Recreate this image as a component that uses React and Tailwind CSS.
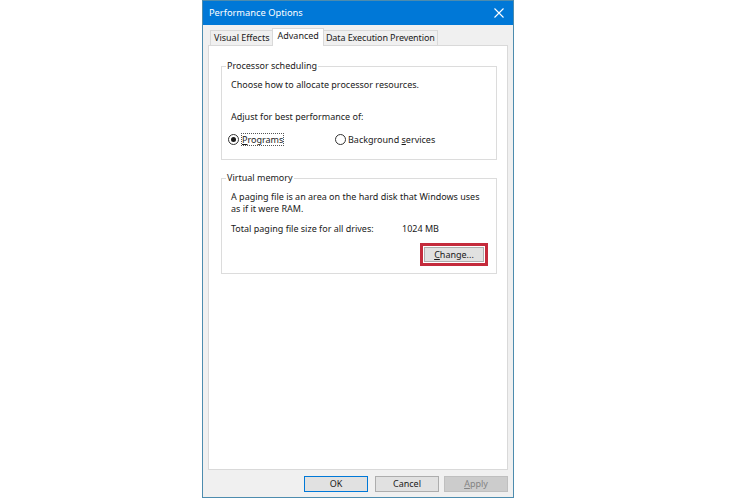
import React from "react";

function Radio({ checked }) {
  return (
    <span className="w-[11px] h-[11px] rounded-full border border-[#333] bg-white flex items-center justify-center shrink-0">
      {checked && <span className="w-[5px] h-[5px] rounded-full bg-[#1a1a1a]" />}
    </span>
  );
}

function GroupBox({ label, children, className }) {
  return (
    <div className={"relative border border-[#dcdcdc] " + className}>
      <span className="absolute left-[4px] top-[-7px] bg-white px-[1px] leading-[12px]">{label}</span>
      {children}
    </div>
  );
}

export default function App() {
  return (
    <div
      className="w-[750px] h-[500px] bg-white text-[#1a1a1a] text-[9px] leading-[12px]"
      style={{ fontFamily: '"Noto Sans", "Open Sans", sans-serif' }}
    >
      <div className="ml-[202px] w-[312px] h-[498px] border border-[#4d8cae] bg-[#f0f0f0] flex flex-col">
        {/* Title bar */}
        <div className="h-[24px] bg-[#0078d7] flex items-center justify-between pl-[6px] pr-[8px] text-white text-[9.3px]">
          <span>Performance Options</span>
          <svg width="10" height="10" viewBox="0 0 10 10" className="mr-[1px]">
            <path d="M0.5 0.5 L9.5 9.5 M9.5 0.5 L0.5 9.5" stroke="#ffffff" strokeWidth="1.1" />
          </svg>
        </div>

        {/* Tabs */}
        <div className="flex items-end pl-[7px] h-[20px]">
          <div className="h-[15px] px-[3px] flex items-center border border-b-0 border-[#d9d9d9] bg-[#f0f0f0] -mr-px">
            Visual Effects
          </div>
          <div className="h-[18px] px-[4px] flex items-center border border-b-0 border-[#d9d9d9] bg-white relative z-10 mb-[-1px] pb-[3px]">
            Advanced
          </div>
          <div className="h-[15px] px-[2px] flex items-center border border-b-0 border-[#d9d9d9] bg-[#f0f0f0] -ml-px tracking-[-0.1px]">
            Data Execution Prevention
          </div>
        </div>

        {/* Panel */}
        <div className="mx-[5px] h-[425px] border border-[#d9d9d9] bg-white pt-[20px] pl-[12px]">
          <GroupBox label="Processor scheduling" className="w-[276px] h-[94px]">
            <div className="pl-[9px] pt-[12px]">
              <div>Choose how to allocate processor resources.</div>
              <div className="mt-[20px]">Adjust for best performance of:</div>
              <div className="flex items-center mt-[10px] ml-[-3px] h-[13px]">
                <div className="w-[107px] flex items-center">
                  <Radio checked />
                  <span className="ml-[2px] border border-dotted border-[#555] leading-[11px]">
                    <span className="underline">P</span>rograms
                  </span>
                </div>
                <Radio />
                <span className="ml-[2px]">
                  Background <span className="underline">s</span>ervices
                </span>
              </div>
            </div>
          </GroupBox>

          <GroupBox label="Virtual memory" className="w-[276px] h-[96px] mt-[18px]">
            <div className="pl-[9px] pt-[12px]">
              <div>A paging file is an area on the hard disk that Windows uses</div>
              <div>as if it were RAM.</div>
              <div className="flex mt-[8px]">
                <span className="w-[171px]">Total paging file size for all drives:</span>
                <span>1024 MB</span>
              </div>
              <div className="flex justify-end pr-[8px] mt-[8px]">
                <div className="border-[3px] border-[#c42b3c] p-[1px]">
                  <div className="w-[60px] h-[15px] bg-[#e1e1e1] border border-[#adadad] flex items-center justify-center">
                    <span><span className="underline">C</span>hange...</span>
                  </div>
                </div>
              </div>
            </div>
          </GroupBox>
        </div>

        {/* Bottom buttons */}
        <div className="flex justify-end pr-[5px] mt-[6px]">
          <div className="w-[64px] h-[16px] bg-[#e1e1e1] border border-[#0078d7] flex items-center justify-center">OK</div>
          <div className="ml-[7px] w-[64px] h-[16px] bg-[#e1e1e1] border border-[#adadad] flex items-center justify-center">Cancel</div>
          <div className="ml-[5px] w-[64px] h-[16px] bg-[#cccccc] border border-[#bfbfbf] text-[#838383] flex items-center justify-center">
            <span><span className="underline">A</span>pply</span>
          </div>
        </div>
      </div>
    </div>
  );
}
